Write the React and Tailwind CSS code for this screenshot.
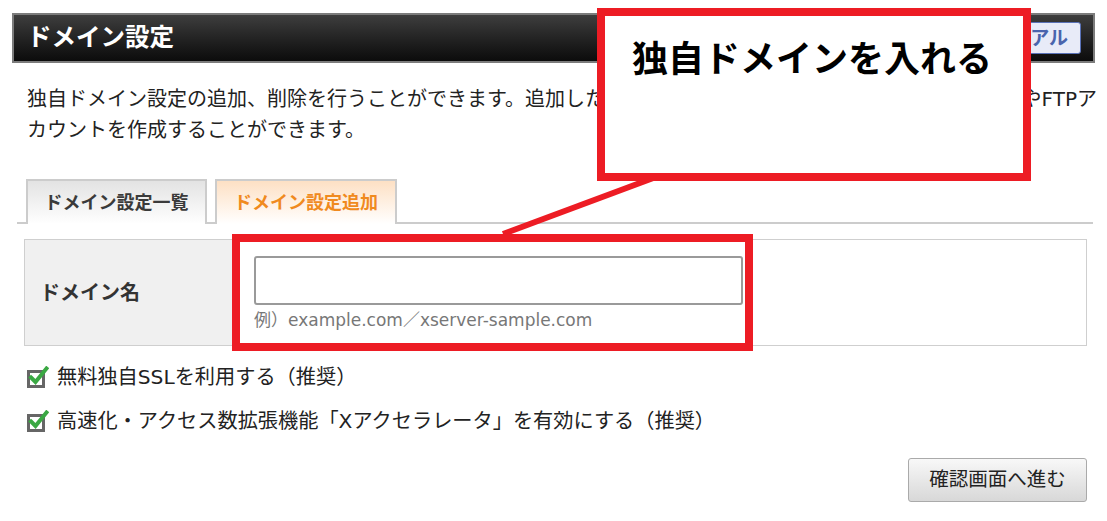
import React from "react";

function CheckIcon() {
  return (
    <svg width="22" height="22" viewBox="0 0 22 22" className="shrink-0">
      <rect x="1.5" y="5.5" width="15" height="15" fill="#fff" stroke="#666" strokeWidth="3" />
      <path d="M4 11.5 L8.5 16 L19.5 2.5" fill="none" stroke="#3aa843" strokeWidth="4" strokeLinecap="square" />
    </svg>
  );
}

export default function App() {
  return (
    <div className="relative w-[1107px] h-[521px] overflow-hidden bg-white text-[#222] font-['DejaVu_Sans','Noto_Sans_CJK_JP',sans-serif]">
      {/* Header */}
      <div className="pt-[13px] px-[12px]">
        <div className="h-[50px] border-2 border-[#7c7c7c] bg-gradient-to-b from-[#3e3e3e] to-[#0c0c0c] flex items-center justify-between pl-[13px] pr-[12px]">
          <div className="text-white font-bold text-[24.5px] leading-none">ドメイン設定</div>
          <div className="h-[32px] pl-[15px] pr-[12px] flex items-center rounded-[3px] bg-[#e8ebf8] border border-[#5a72b8] text-[#4a64ad] font-bold text-[19px] leading-none">
            アル
          </div>
        </div>
      </div>

      {/* Description */}
      <div className="mt-[21px] pl-[27px] pr-[10px] text-[20px] leading-[31px]">
        <div className="flex justify-between whitespace-nowrap">
          <span>独自ドメイン設定の追加、削除を行うことができます。追加した独自ドメインでは、メールアドレス</span>
          <span>やFTPア</span>
        </div>
        <div>カウントを作成することができます。</div>
      </div>

      {/* Tabs */}
      <div className="mt-[33px] ml-[17px] w-[1076px] border-b-2 border-[#cccccc] flex items-end gap-[8px] pl-[9px] h-[45px]">
        <div className="-mb-[2px] w-[181px] h-[45px] border-2 border-b-0 border-[#cccccc] bg-gradient-to-b from-[#e3e3e3] to-[#ffffff] flex items-center justify-center text-[18px] font-bold text-[#3a3a3a]">
          ドメイン設定一覧
        </div>
        <div className="-mb-[2px] w-[182px] h-[45px] border-2 border-b-0 border-[#cccccc] bg-gradient-to-b from-[#fde0c4] to-[#ffffff] flex items-center justify-center text-[18px] font-bold text-[#f08a1e]">
          ドメイン設定追加
        </div>
      </div>

      {/* Table */}
      <div className="mt-[15px] ml-[24px] w-[1063px] h-[107px] border border-[#cfcfcf] flex">
        <div className="w-[208px] bg-[#f0f0f0] border-r border-[#cfcfcf] flex items-center pl-[15px] text-[20px] font-bold text-[#333]">
          ドメイン名
        </div>
        <div className="pl-[21px] pt-[16px]">
          <div className="w-[489px] h-[49px] border-2 border-[#9a9a9a] rounded-[3px] bg-white"></div>
          <div className="mt-[5px] text-[17px] leading-[20px] text-[#777]">例）example.com／xserver-sample.com</div>
        </div>
      </div>

      {/* Checkboxes */}
      <div className="mt-[16px] ml-[27px] flex items-center gap-[8px] h-[30px] text-[20.2px] leading-[30px]">
        <CheckIcon />
        <span>無料独自SSLを利用する（推奨）</span>
      </div>
      <div className="mt-[14px] ml-[27px] flex items-center gap-[8px] h-[30px] text-[20.2px] leading-[30px]">
        <CheckIcon />
        <span>高速化・アクセス数拡張機能「Xアクセラレータ」を有効にする（推奨）</span>
      </div>

      {/* Button */}
      <div className="mt-[22px] flex justify-end pr-[20px]">
        <div className="w-[179px] h-[44px] rounded-[3px] border border-[#aaaaaa] bg-gradient-to-b from-[#f8f8f8] to-[#d8d8d8] flex items-center justify-center text-[19.5px] text-[#222]">
          確認画面へ進む
        </div>
      </div>

      {/* Annotation overlays */}
      <svg className="absolute left-0 top-0 pointer-events-none" width="1107" height="521">
        <line x1="656" y1="177" x2="503" y2="234" stroke="#ed1c24" strokeWidth="6" />
      </svg>
      <div className="absolute left-[597px] top-[8px] w-[434px] h-[173px] border-[8px] border-[#ed1c24] bg-white pl-[27px] pt-[22px]">
        <div className="text-[36px] font-bold leading-[44px] text-black">独自ドメインを入れる</div>
      </div>
      <div className="absolute left-[232px] top-[234px] w-[521px] h-[117px] border-[8px] border-[#ed1c24]"></div>
    </div>
  );
}
